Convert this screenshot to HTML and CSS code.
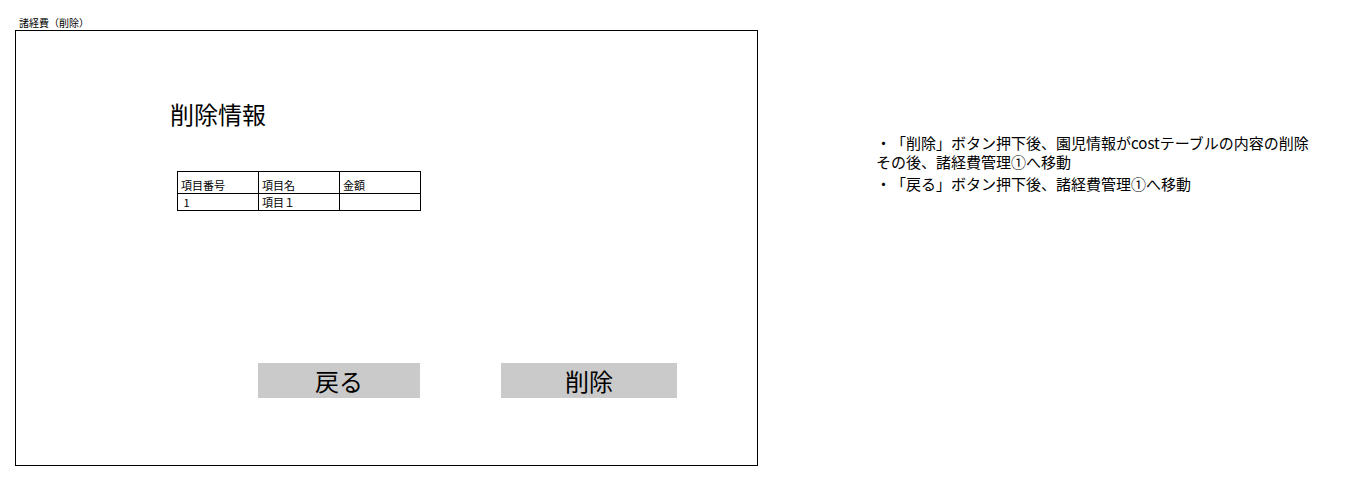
FILE: index.html
```html
<!DOCTYPE html>
<html lang="ja">
<head>
<meta charset="utf-8">
<title>諸経費（削除）</title>
<link rel="stylesheet" href="styles.css">
</head>
<body>
<div class="page">
  <div class="screen">
    <div class="screen-label">諸経費（削除）</div>
    <div class="frame">
      <div class="title">削除情報</div>
      <div class="grid">
        <div class="cell head">項目番号</div>
        <div class="cell head">項目名</div>
        <div class="cell head">金額</div>
        <div class="cell">&nbsp;1</div>
        <div class="cell">項目１</div>
        <div class="cell"></div>
      </div>
      <div class="buttons">
        <div class="btn btn-back">戻る</div>
        <div class="btn btn-delete">削除</div>
      </div>
    </div>
  </div>
  <div class="notes">
    <p class="note">・「削除」ボタン押下後、園児情報がcostテーブルの内容の削除<br>その後、諸経費管理①へ移動</p>
    <p class="note">・「戻る」ボタン押下後、諸経費管理①へ移動</p>
  </div>
</div>
</body>
</html>
```

FILE: styles.css
```css
html, body {
  margin: 0;
  padding: 0;
  background: #ffffff;
  color: #000000;
  font-family: "Noto Sans CJK JP", "Noto Sans", sans-serif;
  text-spacing-trim: space-all;
}

.page {
  display: flex;
  align-items: flex-start;
  padding-top: 16px;
}

.screen {
  display: flex;
  flex-direction: column;
  padding-left: 15px;
}

.screen-label {
  font-size: 10px;
  line-height: 14px;
  height: 14px;
  padding-left: 4px;
}

.frame {
  box-sizing: border-box;
  width: 743px;
  height: 436px;
  border: 1px solid #000000;
  display: flex;
  flex-direction: column;
  align-items: flex-start;
}

.title {
  margin-top: 69px;
  margin-left: 154px;
  font-size: 24px;
  line-height: 28px;
}

.grid {
  margin-top: 43px;
  margin-left: 161px;
  display: grid;
  grid-template-columns: 81px 81px 81px;
  grid-template-rows: 22px 17px;
  border-left: 1px solid #000000;
  border-top: 1px solid #000000;
}

.cell {
  border-right: 1px solid #000000;
  border-bottom: 1px solid #000000;
  font-size: 11px;
  line-height: 14px;
  padding-left: 3px;
  display: flex;
  align-items: center;
  white-space: pre;
}

.cell.head {
  align-items: flex-end;
  padding-bottom: 1px;
}

.buttons {
  margin-top: 152px;
  margin-left: 242px;
  display: flex;
  gap: 81px;
}

.btn {
  height: 35px;
  background: #cacaca;
  font-size: 24px;
  line-height: 35px;
  text-align: center;
}

.btn-back {
  width: 162px;
}

.btn-delete {
  width: 176px;
}

.notes {
  margin-left: 118px;
  margin-top: 117px;
}

.note {
  margin: 0 0 3px 0;
  font-size: 15px;
  line-height: 19px;
}
```
